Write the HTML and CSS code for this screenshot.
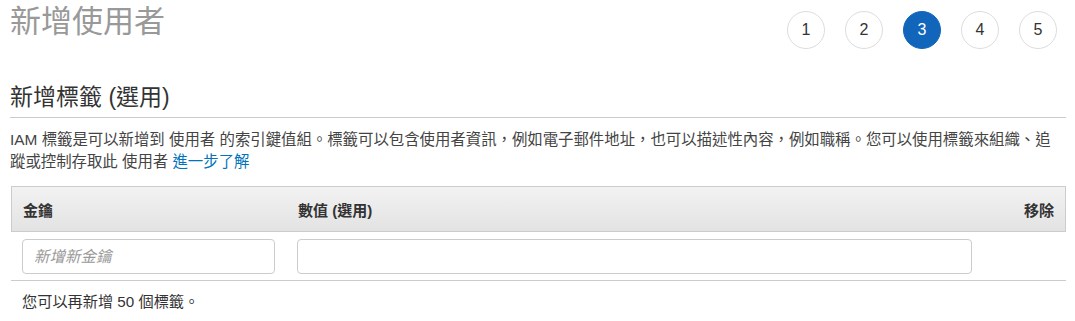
FILE: index.html
```html
<!DOCTYPE html>
<html lang="zh-Hant">
<head>
<meta charset="utf-8">
<title>新增使用者</title>
<link rel="stylesheet" href="styles.css">
</head>
<body>
<div class="page">
  <div class="top">
    <h1 class="title">新增使用者</h1>
    <ol class="steps">
      <li class="step">1</li>
      <li class="step">2</li>
      <li class="step active">3</li>
      <li class="step">4</li>
      <li class="step">5</li>
    </ol>
  </div>
  <h2 class="section-title">新增標籤 (選用)</h2>
  <p class="desc">IAM 標籤是可以新增到 使用者 的索引鍵值組。標籤可以包含使用者資訊，例如電子郵件地址，也可以描述性內容，例如職稱。您可以使用標籤來組織、追蹤或控制存取此 使用者 <a class="link" href="#">進一步了解</a></p>
  <div class="tags">
    <div class="tags-head">
      <div class="th">金鑰</div>
      <div class="th">數值 (選用)</div>
      <div class="th th-right">移除</div>
    </div>
    <div class="tags-row">
      <input class="field" type="text" placeholder="新增新金鑰">
      <input class="field" type="text">
      <div></div>
    </div>
  </div>
  <p class="remaining">您可以再新增 50 個標籤。</p>
</div>
</body>
</html>
```
FILE: styles.css
```css
* { box-sizing: border-box; }
html, body { margin: 0; padding: 0; background: #fff; }
body {
  font-family: "Liberation Sans", "Noto Sans CJK TC", sans-serif;
  color: #333;
}
.page { padding: 0 9px 0 10px; }

.top {
  display: flex;
  justify-content: space-between;
  align-items: flex-start;
  height: 82px;
}
.title {
  margin: 0;
  font-size: 31px;
  font-weight: 400;
  line-height: 44px;
  color: #999;
}
.steps {
  display: flex;
  gap: 20px;
  list-style: none;
  margin: 11px 0 0;
  padding: 0 9px 0 0;
}
.step {
  width: 38px;
  height: 38px;
  border: 1px solid #ddd;
  border-radius: 50%;
  display: flex;
  align-items: center;
  justify-content: center;
  font-size: 16px;
  color: #333;
  background: #fff;
}
.step.active {
  background: #1166bb;
  border-color: #1166bb;
  color: #fff;
}

.section-title {
  margin: 0;
  font-size: 23px;
  font-weight: 400;
  line-height: 30px;
  color: #333;
  padding-bottom: 5px;
  border-bottom: 1px solid #ccc;
}
.desc {
  margin: 11px 0 0;
  padding-right: 10px;
  font-size: 15.4px;
  line-height: 22px;
  color: #444;
}
.link { color: #0073bb; text-decoration: none; }

.tags { margin: 13px 0 0 1px; }
.tags-head, .tags-row {
  display: grid;
  grid-template-columns: 253px 675px 1fr;
  column-gap: 22px;
  align-items: center;
}
.tags-head {
  height: 46px;
  border: 1px solid #ccc;
  background: linear-gradient(#f2f2f2, #e3e3e3);
  padding: 0 11px 0 11px;
}
.th {
  font-size: 15px;
  font-weight: 700;
  color: #333;
}
.th-right { text-align: right; }
.tags-row {
  padding: 7px 11px 6px 11px;
  border-bottom: 1px solid #ccc;
}
.field {
  height: 35px;
  width: 100%;
  border: 1px solid #ccc;
  border-radius: 4px;
  padding: 0 11px;
  font: 15.5px "Liberation Sans", "Noto Sans CJK TC", sans-serif;
  color: #333;
  background: #fff;
  outline: none;
}
.field::placeholder { color: #999; font-style: italic; }

.remaining {
  margin: 11px 0 0;
  padding-left: 12px;
  font-size: 15.2px;
  line-height: 20px;
  color: #333;
}
```
